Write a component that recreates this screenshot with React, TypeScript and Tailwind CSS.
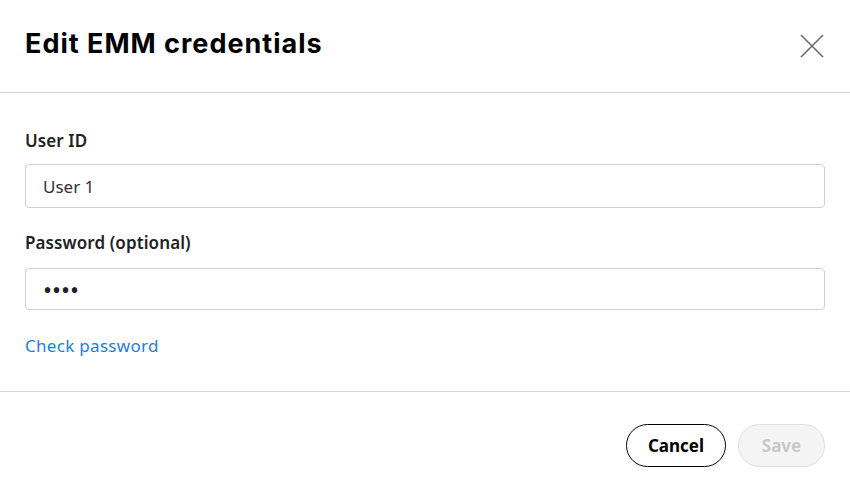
export default function App() {
  return (
    <div className="min-h-screen w-full bg-white font-['Noto_Sans',sans-serif] text-[#222]">
      {/* Header */}
      <div className="flex h-[93px] items-center justify-between border-b border-[#d6d6d6] pl-[25px] pr-[26px]">
        <h1 className="pb-[4px] font-['Inter',sans-serif] text-[27px] font-bold tracking-[1px] text-black">
          Edit EMM credentials
        </h1>
        <button className="flex h-[24px] w-[24px] items-center justify-center text-[#666]" aria-label="Close">
          <svg width="24" height="24" viewBox="0 0 24 24" fill="none" stroke="currentColor" strokeWidth="1.5">
            <path d="M1 1 L23 23 M23 1 L1 23" />
          </svg>
        </button>
      </div>

      {/* Body */}
      <div className="flex flex-col px-[25px] pt-[36px] pb-[33px]">
        <label className="text-[17px] leading-[24px] font-semibold tracking-[0.1px] text-[#222]">User ID</label>
        <input
          className="mt-[11px] h-[44px] w-full rounded-[4px] border border-[#cfcfcf] px-[17px] text-[17px] text-[#333] outline-none"
          defaultValue="User 1"
        />
        <label className="mt-[23px] text-[17px] leading-[24px] font-semibold tracking-[0.1px] text-[#222]">
          Password (optional)
        </label>
        <input
          type="password"
          className="mt-[13px] h-[42px] w-full rounded-[4px] border border-[#cfcfcf] px-[17px] text-[24px] text-[#222] outline-none"
          defaultValue="1234"
        />
        <a className="mt-[24px] self-start text-[17px] leading-[24px] tracking-[0.3px] text-[#1a7fe0]" href="#">
          Check password
        </a>
      </div>

      {/* Footer */}
      <div className="flex justify-end gap-[12px] border-t border-[#d6d6d6] px-[25px] pt-[32px]">
        <button className="h-[43px] w-[100px] rounded-full border border-black text-[17px] font-bold text-black">
          Cancel
        </button>
        <button
          disabled
          className="h-[43px] w-[87px] rounded-full border border-[#dedede] bg-[#f4f4f4] text-[17px] font-bold text-[#c8c8c8]"
        >
          Save
        </button>
      </div>
    </div>
  )
}
